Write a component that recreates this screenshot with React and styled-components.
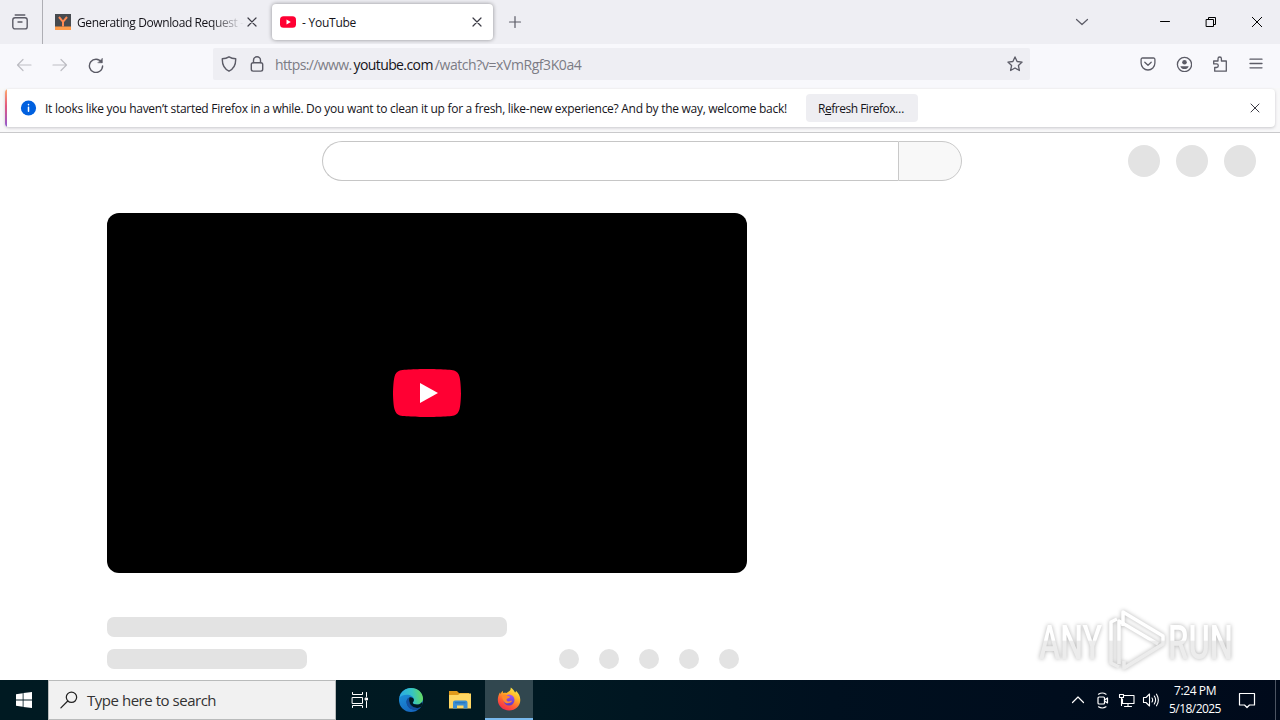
import React from 'react';
import styled, { createGlobalStyle } from 'styled-components';

const GlobalStyle = createGlobalStyle`
  * {
    box-sizing: border-box;
  }

  body {
    margin: 0;
    overflow: hidden;
    background: #fff;
    font-family: "Open Sans", "Noto Sans", sans-serif;
  }
`;

const Screen = styled.div`
  position: relative;
  display: flex;
  flex-direction: column;
  width: 1280px;
  height: 720px;
  overflow: hidden;
  background: #fff;
`;

const Icon = styled.svg.attrs(props => ({
  viewBox: props.viewBox || '0 0 16 16',
  fill: 'none',
  stroke: 'currentColor'
}))`
  display: block;
  flex: none;
  width: ${props => props.$w || 16}px;
  height: ${props => props.$h || props.$w || 16}px;
  color: ${props => props.$color || '#5b5b66'};
  stroke-width: ${props => props.$stroke || 1.2};
  stroke-linecap: round;
  stroke-linejoin: round;
`;

const Label = styled.span`
  white-space: pre;
  font-size: ${props => props.$size || 12}px;
  line-height: 16px;
  letter-spacing: ${props => props.$spacing || 0}px;
  color: ${props => props.$color || '#15141a'};
`;

/* Tab strip */

const TabStrip = styled.div`
  display: flex;
  flex: none;
  height: 44px;
  background: #eeeef3;
`;

const FirefoxView = styled.div`
  display: flex;
  align-items: center;
  width: 43px;
  padding-left: 12px;
  border-right: 1px solid #aeaeb4;
`;

const Tab = styled.div`
  display: flex;
  align-items: center;
  gap: 6px;
  width: ${props => props.$active ? 221 : 217}px;
  height: ${props => props.$active ? 36 : 44}px;
  margin: ${props => props.$active ? '4px 0 0 12px' : '0'};
  padding: ${props => props.$active ? '0 8px' : '0 0 0 12px'};
  border-radius: 4px;
  background: ${props => props.$active ? '#fff' : 'transparent'};
  box-shadow: ${props => props.$active ? '0 0 4px rgba(0, 0, 0, 0.4)' : 'none'};
`;

const Favicon = styled.svg`
  flex: none;
  width: 16px;
  height: 16px;
`;

const TabTitle = styled(Label)`
  flex: 1;
  min-width: 0;
  margin-right: ${props => props.$fade ? -6 : 0}px;
  padding-top: 2px;
  mask-image: ${props => props.$fade ? 'linear-gradient(to left, transparent, #000 34px)' : 'none'};
`;

const NewTab = styled.div`
  display: flex;
  align-items: center;
  padding-left: 14px;
`;

const WindowControls = styled.div`
  display: flex;
  align-items: center;
  gap: 30px;
  margin-left: auto;
  padding-right: 15px;
`;

const ListTabs = styled.div`
  margin-right: 37px;
`;

/* Navigation bar */

const NavBar = styled.div`
  display: flex;
  align-items: flex-start;
  flex: none;
  height: 44px;
  padding-top: 4px;
  background: #f8f8fc;
`;

const NavGroup = styled.div`
  display: flex;
  align-items: center;
  gap: 20px;
  height: 32px;
  width: ${props => props.$width ? `${props.$width}px` : 'auto'};
  padding: ${props => props.$padding || 0};
`;

const UrlBar = styled.div`
  display: flex;
  align-items: center;
  width: 817px;
  height: 32px;
  padding: 0 7px 0 8px;
  border-radius: 2px;
  background: #eeeef3;
`;

const Lock = styled.div`
  margin: 0 10px 0 12px;
`;

const Url = styled.div`
  flex: 1;
  display: flex;
  gap: 2px;
  padding-top: 2px;
`;

/* Notification */

const NotificationArea = styled.div`
  flex: none;
  height: 45px;
  padding: 1px 5px 0;
  border-bottom: 1px solid #c9c9cb;
  background: #f8f8f9;
`;

const Notification = styled.div`
  display: flex;
  align-items: center;
  height: 38px;
  padding: 0 12px 0 14px;
  border-radius: 4px;
  background: linear-gradient(#ffab6b, #e2577f 45%, #9059d0) 0 0 / 2px 100% no-repeat #fff;
  box-shadow: 0 1px 3px rgba(58, 57, 68, 0.25);
`;

const Message = styled(Label)`
  flex: none;
  width: 769px;
  padding: 2px 0 0 8px;
`;

const RefreshButton = styled.button`
  flex: none;
  width: 112px;
  height: 28px;
  margin: 0 auto 0 0;
  padding: 0 2px 0 0;
  border: 0;
  border-radius: 4px;
  background: #eeeef2;
  font-family: inherit;
`;

/* Page */

const Page = styled.main`
  flex: 1;
  min-height: 0;
  overflow: hidden;
`;

const Masthead = styled.div`
  display: flex;
  align-items: center;
  height: 56px;
  padding: 0 24px 0 322px;
`;

const SearchInput = styled.div`
  width: 576px;
  height: 40px;
  border: 1px solid #c6c6c6;
  border-right: 0;
  border-radius: 20px 0 0 20px;
`;

const SearchButton = styled.div`
  width: 64px;
  height: 40px;
  border: 1px solid #c9c9c9;
  border-radius: 0 20px 20px 0;
  background: #f8f8f8;
`;

const Dots = styled.div`
  display: flex;
  gap: ${props => props.$gap}px;
  margin-left: auto;
`;

const Dot = styled.div`
  width: ${props => props.$size}px;
  height: ${props => props.$size}px;
  border-radius: 50%;
  background: #e3e3e3;
`;

const Primary = styled.div`
  width: 640px;
  margin: 24px 0 0 107px;
`;

const Player = styled.div`
  display: flex;
  align-items: center;
  justify-content: center;
  height: 360px;
  border-radius: 12px;
  background: #000;
`;

const Info = styled.div`
  display: flex;
  flex-direction: column;
  gap: 12px;
  padding-top: 44px;
`;

const InfoRow = styled.div`
  display: flex;
  padding-right: 8px;
`;

const Bone = styled.div`
  width: ${props => props.$width}px;
  height: 20px;
  border-radius: 7px;
  background: #e3e3e3;
`;

const Watermark = styled.svg`
  position: absolute;
  left: 1030px;
  top: 602px;
  width: 212px;
  height: 76px;
  overflow: visible;
  filter: drop-shadow(0 0 2px rgba(0, 0, 0, 0.3));
  font-family: Roboto, sans-serif;
`;

/* Taskbar */

const Taskbar = styled.div`
  display: flex;
  flex: none;
  height: 40px;
  background: linear-gradient(90deg, #001a22 0%, #001922 42%, #00101f 65%, #000a1b 100%);
`;

const TaskButton = styled.div`
  display: flex;
  align-items: center;
  justify-content: center;
  width: ${props => props.$width || 48}px;
  height: 40px;
  margin-left: ${props => props.$active ? 3 : 0}px;
  background: ${props => props.$active ? '#31474f' : 'transparent'};
  border-bottom: ${props => props.$active ? '2px solid #78b9ed' : '0'};
`;

const TaskSearch = styled.div`
  display: flex;
  align-items: center;
  gap: 9px;
  width: 288px;
  padding-left: 11px;
  border: 1px solid #b9bbbb;
  background: #f1f1f1;
`;

const Tray = styled.div`
  display: flex;
  align-items: center;
  gap: 7px;
  margin-left: auto;
  padding-right: 4px;
`;

const Clock = styled.div`
  display: flex;
  flex-direction: column;
  align-items: center;
  gap: 2px;
  width: 56px;
`;

const ShowDesktop = styled.div`
  width: 1px;
  height: 40px;
  margin-left: 4px;
  background: #4c5462;
`;

const Close = ({ size = 16, color = '#3c3b45', stroke = 1.2 }) => (
  <Icon $w={size} $color={color} $stroke={stroke}>
    <path d="M4 4l8 8M12 4l-8 8" />
  </Icon>
);

const EdgeIcon = () => (
  <svg width="24" height="24" viewBox="0 0 24 24">
    <defs>
      <linearGradient id="edgeTop" x1="0" y1="0.5" x2="1" y2="0.4">
        <stop offset="0" stopColor="#2aa9e8" />
        <stop offset="0.55" stopColor="#35c4c4" />
        <stop offset="1" stopColor="#67dc5b" />
      </linearGradient>
      <linearGradient id="edgeSide" x1="0" y1="0" x2="0.5" y2="1">
        <stop offset="0" stopColor="#1d9ade" />
        <stop offset="1" stopColor="#1668c0" />
      </linearGradient>
    </defs>
    <circle cx="12" cy="12" r="12" fill="url(#edgeSide)" />
    <path d="M.4 9.600C1.600 4 6.300 0 12 0c6.800 0 12 4.800 12 10.500 0 3.600-2.800 6-6.300 6-2.500 0-4-.9-4-1.700 0-.6 1.200-1.200 1.200-3.100C14.900 8.700 11.500 6.700 8 6.700c-3.600 0-6.200 1-7.600 2.900z" fill="url(#edgeTop)" />
    <path d="M10.300 9.400C8 10.500 7 13 7.800 15.800c1 3.800 4.700 6.200 8.700 6 2.200-.1 4.200-1.200 5.700-2.800-3.200 1.500-6.800 1.100-9.300-1-2.400-2-3.400-5.500-2.600-8.600z" fill="#103f88" />
    <path d="M13.700 14.800c0 .8 1.500 1.700 4 1.700 2.300 0 4.300-1 5.400-2.600l.3 2.100-1.200 3c-3.500 1.600-7 1-9.300-1-2.200-1.900-3.400-5.500-2.600-8.600 2-.6 4.600.2 4.600 2.300 0 1.900-1.200 2.500-1.200 3.100z" fill="#001a22" />
    <path d="M22.200 19.100c-1.500.8-3.300 1.200-5 1-3.300-.2-6-2.300-6.900-5-.5-2-.5-4 0-5.700-2.300 1.100-3.300 3.600-2.500 6.400 1 3.800 4.700 6.200 8.700 6 2.200-.1 4.200-1.200 5.700-2.700z" fill="#14509f" />
  </svg>
);

const ExplorerIcon = () => (
  <svg width="22" height="20" viewBox="0 0 22 20">
    <path d="M0 1h8l2 2h10v4H0z" fill="#e09a1b" />
    <path d="M0 5h9l2-1.500h11V18.500H0z" fill="#ffd763" />
    <path d="M4 18.500V12.500a2 2 0 0 1 2-2h10.500a2 2 0 0 1 2 2v6h-4V15.500h-6.500v3z" fill="#3c8fd3" />
    <path d="M6 12.800h10.500" stroke="#2271b4" strokeWidth="1" />
  </svg>
);

const FirefoxIcon = () => (
  <svg width="24" height="24" viewBox="0 0 24 24">
    <defs>
      <linearGradient id="foxBody" x1="0.8" y1="0" x2="0.25" y2="1">
        <stop offset="0" stopColor="#fff14a" />
        <stop offset="0.38" stopColor="#ffae24" />
        <stop offset="0.68" stopColor="#ff5e35" />
        <stop offset="1" stopColor="#f2264f" />
      </linearGradient>
      <linearGradient id="foxGlobe" x1="0.5" y1="0" x2="0.5" y2="1">
        <stop offset="0" stopColor="#a455f4" />
        <stop offset="1" stopColor="#5b3bc5" />
      </linearGradient>
    </defs>
    <path d="M13.800.5c2.200 1.400 3.500 3.300 4.200 5 .8-.2 1-.9 1-1.700 2.500 2.400 4.300 5.500 4.300 9.200 0 6-5 10.500-11.200 10.500C5.800 23.500.8 18.800.8 12.800c0-3 1-5.700 2.300-7.600l.4 1.900c.5-1.400 1.300-2.500 2.300-3.300l.2 2.300c1.200-.5 2.600-.6 3.700-.2 1-1 2.500-1.500 3.300-2.400.5-.8.8-1.800.8-3z" fill="url(#foxBody)" />
    <circle cx="12" cy="13" r="5.500" fill="url(#foxGlobe)" />
    <path d="M4.800 8.600c1.900-1.500 4.700-1 6 .4 1 .1 1.900.3 2.200.9-.8 1.400-2.500 1.200-3.200 2.100-.7 1 .4 2.500 2 2.400 1.400-.1 2.200-1 3.400-.6-1.300 2.500-4.800 3.300-7.300 1.600-2.600-1.800-2.500-4.800-3.100-6.800z" fill="#ff8b2b" />
  </svg>
);

const TabStripRow = () => (
  <TabStrip>
    <FirefoxView>
      <Icon $stroke={1.4}>
        <path d="M3.200 1h9.600" />
        <rect x="0.800" y="3.700" width="14.400" height="11.200" rx="2.200" />
        <path d="M6 8h4" />
      </Icon>
    </FirefoxView>
    <Tab>
      <Favicon viewBox="0 0 16 16">
        <rect width="16" height="16" fill="#474b50" />
        <rect y="12.500" width="16" height="3.500" fill="#ff9c4a" />
        <path d="M4 3l4 4.800L12 3M8 7.800V12.500" fill="none" stroke="#ff8a52" strokeWidth="2" />
      </Favicon>
      <TabTitle $fade $spacing={-0.39}>Generating Download Request -</TabTitle>
      <Close />
    </Tab>
    <Tab $active>
      <Favicon viewBox="0 0 16 16">
        <rect y="2.200" width="16" height="11.600" rx="3.500" fill="#ff0033" />
        <path d="M6.500 5.500v5L10.800 8z" fill="#fff" />
      </Favicon>
      <TabTitle $spacing={-0.25}>- YouTube</TabTitle>
      <Close />
    </Tab>
    <NewTab>
      <Icon>
        <path d="M8 2.500v11M2.500 8h11" />
      </Icon>
    </NewTab>
    <WindowControls>
      <ListTabs>
        <Icon><path d="M2.500 5.500L8 10.500l5.500-5" /></Icon>
      </ListTabs>
      <Icon $color="#000" $stroke={1}><path d="M3.500 7.500h9" /></Icon>
      <Icon $color="#000" $stroke={1}>
        <path d="M3.500 5.500h7v7h-7zM5.500 5.500v-2h7v7h-2" />
      </Icon>
      <Icon $color="#000" $stroke={1}><path d="M3.300 3.300l9.400 9.400M12.700 3.300l-9.400 9.400" /></Icon>
    </WindowControls>
  </TabStrip>
);

const NavigationBar = () => (
  <NavBar>
    <NavGroup $width={213} $padding="1px 0 0 16px">
      <Icon $color="#bdbdc3"><path d="M15 8H1.500M7 2.500L1.500 8 7 13.500" /></Icon>
      <Icon $color="#bdbdc3"><path d="M1 8h13.500M9 2.500L14.500 8 9 13.500" /></Icon>
      <Icon $stroke={1.400}>
        <path d="M13.500 5.200A6.600 6.600 0 1 0 14.600 9" />
        <path d="M14.400 1.500v4.300h-4.300z" fill="currentColor" strokeWidth="0.500" />
      </Icon>
    </NavGroup>
    <UrlBar>
      <Icon $stroke={1.400}>
        <path d="M8 .8c2 1.200 4.300 1.800 6.700 2C14.900 8.500 12.700 13 8 15.200 3.300 13 1.100 8.500 1.300 2.800 3.700 2.600 6 2 8 .8z" />
      </Icon>
      <Lock>
        <Icon $stroke={1.400}>
          <rect x="2.300" y="6.800" width="11.400" height="8.300" rx="1.800" />
          <path d="M4.500 6.500V4.300a3.500 3.500 0 0 1 7 0v2.200" />
        </Icon>
      </Lock>
      <Url>
        <Label $size={14} $spacing={-0.62} $color="#7c7c85">https://www.</Label>
        <Label $size={14} $spacing={-0.6}>youtube.com</Label>
        <Label $size={14} $spacing={-0.42} $color="#7c7c85">/watch?v=xVmRgf3K0a4</Label>
      </Url>
      <Icon $stroke={1.300}>
        <path d="M8 .9l2.100 4.600 5 .6-3.700 3.400 1 5L8 12l-4.400 2.500 1-5L.9 6.100l5-.6z" />
      </Icon>
    </UrlBar>
    <NavGroup $padding="0 16px 0 110px">
      <Icon $stroke={1.300}>
        <path d="M2.500 2h11a1.400 1.400 0 0 1 1.400 1.400v3.700a6.900 6.900 0 0 1-13.800 0V3.400A1.400 1.400 0 0 1 2.500 2z" />
        <path d="M4.800 6.300L8 9.300l3.200-3" />
      </Icon>
      <Icon $stroke={1.300}>
        <circle cx="8.500" cy="8.500" r="7.100" />
        <circle cx="8.500" cy="6.300" r="2.300" fill="currentColor" stroke="none" />
        <path d="M4.300 10.200h8.400c-.6 2-2.300 2.900-4.200 2.900s-3.600-.9-4.200-2.900z" fill="currentColor" stroke="none" />
      </Icon>
      <Icon $stroke={1.300}>
        <path d="M2.700 15.200V11.500h1.800a1.700 1.700 0 0 0 0-3.600H1.700V5H6V2.700a1.700 1.700 0 0 1 3.400 0V5h4.900v10.200z" />
      </Icon>
      <Icon $stroke={1.300}><path d="M2 3.200h12M2 7.500h12M2 11.800h12" /></Icon>
    </NavGroup>
  </NavBar>
);

const NotificationBar = () => (
  <NotificationArea>
    <Notification>
      <Icon $w={18} viewBox="-1.500 -1 18 18">
        <circle cx="8" cy="8" r="7.600" fill="#0060df" stroke="none" />
        <path d="M8 7.300v4M8 4.600v.2" stroke="#fff" strokeWidth="1.500" />
      </Icon>
      <Message $spacing={-0.283}>
        It looks like you haven’t started Firefox in a while. Do you want to clean it up for a fresh, like-new experience? And by the way, welcome back!
      </Message>
      <RefreshButton>
        <Label $spacing={-0.49}>R<u>e</u>fresh Firefox…</Label>
      </RefreshButton>
      <Close stroke={1} />
    </Notification>
  </NotificationArea>
);

const App = () => (
  <>
    <GlobalStyle />
    <Screen>
      <TabStripRow />
      <NavigationBar />
      <NotificationBar />
      <Page>
        <Masthead>
          <SearchInput />
          <SearchButton />
          <Dots $gap={16}>
            {[0, 1, 2].map(i => <Dot key={i} $size={32} />)}
          </Dots>
        </Masthead>
        <Primary>
          <Player>
            <svg width="68" height="48" viewBox="0 0 68 48">
              <path d="M66.500 7.700c-.8-2.900-2.500-5.400-5.400-6.200C55.800.1 34 0 34 0S12.200.1 6.900 1.500C4 2.300 2.300 4.800 1.500 7.700.1 13 0 24 0 24s.1 11 1.500 16.300c.8 2.900 2.500 5.400 5.400 6.200C12.200 47.900 34 48 34 48s21.800-.1 27.100-1.500c2.900-.8 4.600-3.300 5.400-6.200C67.900 35 68 24 68 24s-.1-11-1.500-16.300z" fill="#f03" />
              <path d="M45 24L27 14v20z" fill="#fff" />
            </svg>
          </Player>
          <Info>
            <Bone $width={400} />
            <InfoRow>
              <Bone $width={200} />
              <Dots $gap={20}>
                {[0, 1, 2, 3, 4].map(i => <Dot key={i} $size={20} />)}
              </Dots>
            </InfoRow>
          </Info>
        </Primary>
      </Page>
      <Taskbar>
        <TaskButton>
          <svg width="16" height="16" viewBox="0 0 16 16" fill="#fff">
            <path d="M0 2.200L6.700 1.200V7.500H0zM7.500 1.100L16 0V7.500H7.500zM0 8.400h6.700v6.400L0 13.800zM7.500 8.400H16V16l-8.500-1.100z" />
          </svg>
        </TaskButton>
        <TaskSearch>
          <Icon $w={18} $color="#222" $stroke={1.1} viewBox="0 0 16 16">
            <circle cx="10.200" cy="5.600" r="4.600" />
            <path d="M6.900 8.900L.8 15" />
          </Icon>
          <Label $size={15} $spacing={-0.47} $color="#333">Type here to search</Label>
        </TaskSearch>
        <TaskButton>
          <Icon $w={18} $color="#fff" $stroke={1} viewBox="0 0 18 18">
            <path d="M1.500 1.500v2h10v-2M1.500 6.500h10v6h-10zM1.500 16.500v-2h10v2M15.500 1.500v4M15.500 10.500v6" />
            <path d="M14.500 7h2v2h-2z" fill="currentColor" />
          </Icon>
        </TaskButton>
        <TaskButton $width={54}><EdgeIcon /></TaskButton>
        <TaskButton $width={44}><ExplorerIcon /></TaskButton>
        <TaskButton $active><FirefoxIcon /></TaskButton>
        <Tray>
          <Icon $color="#fff"><path d="M2.500 10.500L8 5l5.500 5.500" /></Icon>
          <Icon $w={18} $color="#fff" viewBox="-0.500 0 18 18">
            <rect x="4.500" y="6" width="6.500" height="7" rx="1" />
            <path d="M11 9l3-2v5l-3-2M5 3.200q3.800-2.400 7.500 0M5 15.800q3.800 2.400 7.500 0" />
          </Icon>
          <Icon $w={17} $color="#fff" $stroke={1.1} viewBox="0 0 17 17">
            <path d="M6 3.500h10v8H4.500V7M10 11.500v3M6.500 14.500h7M1.500 2.500h4v3h-4zM3.500 5.500v8" />
          </Icon>
          <Icon $w={18} $color="#fff" $stroke={1.1} viewBox="0 0 18 18">
            <path d="M1.500 6.500H4l3.500-3.500v12L4 11.500H1.500zM10 7q1.300 2 0 4M12.300 5q2.600 4 0 8M14.500 3.200q3.700 5.800 0 11.600" />
          </Icon>
          <Clock>
            <Label $color="#fff" $spacing={-0.4}>7:24 PM</Label>
            <Label $color="#fff" $spacing={-0.55}>5/18/2025</Label>
          </Clock>
          <Icon $w={34} $h={18} $color="#fff" viewBox="-8 0 34 18">
            <path d="M1.500 2.500h15v11.500h-5L9 16.500 6.500 14h-5z" />
          </Icon>
          <ShowDesktop />
        </Tray>
      </Taskbar>
      <Watermark viewBox="0 0 212 76">
        <defs>
          <linearGradient id="mark" gradientUnits="userSpaceOnUse" x1="0" y1="0" x2="0" y2="76">
            <stop offset="0.5" stopColor="#fff" />
            <stop offset="0.52" stopColor="#ececec" />
          </linearGradient>
        </defs>
        <g fill="url(#mark)" fontSize="49" fontWeight="500">
          <text x="9" y="57" textLength="63" lengthAdjust="spacingAndGlyphs">ANY</text>
          <text x="138" y="57" textLength="65" lengthAdjust="spacingAndGlyphs">RUN</text>
        </g>
        <g fill="none" stroke="url(#mark)" strokeWidth="3.500" strokeLinejoin="round">
          <path d="M87 17l-6 3v41l8 4" />
          <path d="M89 62V19l39 23" />
          <path d="M93 24V10l40 24v8L94 66v-7" />
        </g>
      </Watermark>
    </Screen>
  </>
);

export default App;
